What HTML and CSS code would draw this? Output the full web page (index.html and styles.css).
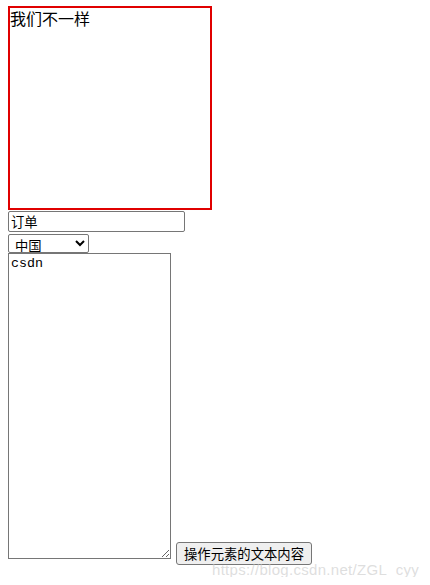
FILE: index.html
```html
<!DOCTYPE html>
<html>
<head>
<meta charset="utf-8">
<link rel="stylesheet" href="styles.css">
</head>
<body>
<div class="box">我们不一样</div>
<input class="txt" type="text" value="订单">
<select class="sel"><option>中国</option></select>
<div class="row">
  <textarea class="area">csdn</textarea>
  <button class="btn">操作元素的文本内容</button>
</div>
<div class="wm">https://blog.csdn.net/ZGL_cyy</div>
</body>
</html>
```
FILE: styles.css
```css
html, body { background: #fff; }
body {
  margin: 6px 8px 8px 8px;
  font-family: "Noto Sans CJK SC", sans-serif;
  font-size: 16px;
  color: #000;
  position: relative;
  height: 571px;
}
.box {
  width: 200px;
  height: 200px;
  border: 2px solid #e00000;
  font-size: 16px;
  line-height: 21px;
}
.txt {
  display: block;
  box-sizing: border-box;
  width: 177px;
  height: 21px;
  margin: 1px 0 0 0;
  padding: 1px 2px;
  border: 1px solid #767676;
  border-radius: 2px;
  font-family: "Noto Sans CJK SC", sans-serif;
  font-size: 13.33px;
}
.sel {
  display: block;
  box-sizing: border-box;
  width: 81px;
  height: 19px;
  margin: 2px 0 0 0;
  padding: 0 0 0 2px;
  border: 1px solid #767676;
  border-radius: 2px;
  font-family: "Noto Sans CJK SC", sans-serif;
  font-size: 13.33px;
  background: #fff;
}
.row {
  display: flex;
  align-items: flex-start;
}
.area {
  box-sizing: border-box;
  width: 163px;
  height: 306px;
  margin: 0;
  padding: 2px;
  border: 1px solid #767676;
  font-family: "Liberation Mono", monospace;
  font-size: 13.33px;
  resize: both;
}
.btn {
  box-sizing: border-box;
  width: 136px;
  height: 23px;
  margin: 289px 0 0 5px;
  padding: 1px 4px;
  border: 1px solid #767676;
  border-radius: 3px;
  background: #efefef;
  font-family: "Noto Sans CJK SC", sans-serif;
  font-size: 13.33px;
  line-height: 18px;
  white-space: nowrap;
}
.wm {
  position: absolute;
  left: 204px;
  top: 555px;
  font-family: "Liberation Sans", sans-serif;
  font-size: 15px;
  letter-spacing: 0.3px;
  line-height: 18px;
  color: rgba(200, 200, 200, 0.6);
  white-space: nowrap;
}
```
